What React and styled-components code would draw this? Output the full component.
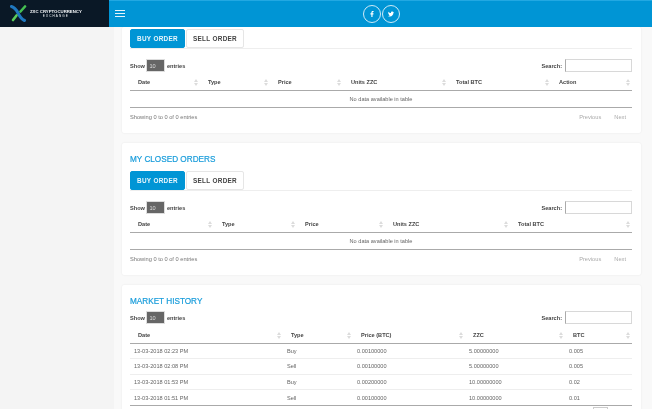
import React from 'react';
import styled, { createGlobalStyle } from 'styled-components';
import { FaFacebookF, FaTwitter } from 'react-icons/fa';

const blue = '#0095d5';

const closedCols = [84, 83, 88, 125, 122];
const openCols = [70, 70, 73, 105, 103, 81];
const historyCols = [153, 70, 112, 100, 67];

const openHeads = ['Date', 'Type', 'Price', 'Units ZZC', 'Total BTC', 'Action'];
const closedHeads = ['Date', 'Type', 'Price', 'Units ZZC', 'Total BTC'];
const historyHeads = ['Date', 'Type', 'Price (BTC)', 'ZZC', 'BTC'];

const history = [
  ['13-03-2018 02:23 PM', 'Buy', '0.00100000', '5.00000000', '0.005'],
  ['13-03-2018 02:08 PM', 'Sell', '0.00100000', '5.00000000', '0.005'],
  ['13-03-2018 01:53 PM', 'Buy', '0.00200000', '10.00000000', '0.02'],
  ['13-03-2018 01:51 PM', 'Sell', '0.00100000', '10.00000000', '0.01'],
];

function SortIcon() {
  return (
    <SortMark width="4" height="7" viewBox="0 0 4 7">
      <path d="M2 0 4 3H0z" />
      <path d="M2 7 0 4h4z" />
    </SortMark>
  );
}

function Logo() {
  return (
    <svg width="17" height="17" viewBox="0 0 17 17" fill="none" strokeLinecap="round">
      <path d="M1.5 1.5c3.5 1 5 3.5 6.500 6.500s3 6 6.500 7.500" stroke="#1f78c0" strokeWidth="3" />
      <path d="M15 1.500 10.500 6.500" stroke="#45c052" strokeWidth="2.600" />
      <path d="M6.500 10.500 3 15" stroke="#5bcc5b" strokeWidth="2.600" />
    </svg>
  );
}

function Controls({ $tight }) {
  return (
    <ControlRow $tight={$tight}>
      <ShowLabel>
        Show <LengthBox>10</LengthBox> entries
      </ShowLabel>
      <SearchLabel>
        Search: <SearchInput />
      </SearchLabel>
    </ControlRow>
  );
}

function Head({ cols, heads }) {
  return (
    <>
      <colgroup>
        {cols.map((w, i) => (
          <col key={i} style={{ width: w }} />
        ))}
      </colgroup>
      <thead>
        <tr>
          {heads.map((h) => (
            <Th key={h}>
              {h}
              <SortIcon />
            </Th>
          ))}
        </tr>
      </thead>
    </>
  );
}

function EmptyTable({ cols, heads }) {
  return (
    <>
      <Controls />
      <Table>
        <Head cols={cols} heads={heads} />
        <tbody>
          <tr>
            <EmptyCell colSpan={heads.length}>No data available in table</EmptyCell>
          </tr>
        </tbody>
      </Table>
      <Footer>
        <span>Showing 0 to 0 of 0 entries</span>
        <Pager>
          <span>Previous</span>
          <span>Next</span>
        </Pager>
      </Footer>
    </>
  );
}

function Tabs() {
  return (
    <TabBar>
      <Tab $active>BUY ORDER</Tab>
      <Tab>SELL ORDER</Tab>
    </TabBar>
  );
}

export default function App() {
  return (
    <Page>
      <GlobalStyle />
      <Header>
        <Brand>
          <Logo />
          <BrandText>
            <strong>ZXC CRYPTOCURRENCY</strong>
            <small>EXCHANGE</small>
          </BrandText>
        </Brand>
        <Bar>
          <Burger>
            <i />
            <i />
            <i />
          </Burger>
          <Social>
            <SocialLink>
              <FaFacebookF />
            </SocialLink>
            <SocialLink>
              <FaTwitter />
            </SocialLink>
          </Social>
        </Bar>
      </Header>
      <Main>
        <Card $top>
          <Tabs />
          <EmptyTable cols={openCols} heads={openHeads} />
        </Card>
        <Card>
          <Title>MY CLOSED ORDERS</Title>
          <Tabs />
          <EmptyTable cols={closedCols} heads={closedHeads} />
        </Card>
        <Card>
          <Title>MARKET HISTORY</Title>
          <Controls $tight />
          <Table>
            <Head cols={historyCols} heads={historyHeads} />
            <tbody>
              {history.map((row) => (
                <Row key={row[0]}>
                  {row.map((cell, i) => (
                    <Td key={i}>{cell}</Td>
                  ))}
                </Row>
              ))}
            </tbody>
          </Table>
          <PageBox />
        </Card>
      </Main>
    </Page>
  );
}

const GlobalStyle = createGlobalStyle`
  html, body {
    margin: 0;
    background: #fff;
    font-family: "Liberation Sans", Arial, sans-serif;
  }
`;

const Page = styled.div`
  height: 409px;
  overflow: hidden;
  display: flex;
  flex-direction: column;
  filter: blur(0.4px);
`;

const Header = styled.header`
  display: flex;
  height: 27px;
  flex: none;
`;

const Brand = styled.div`
  width: 109px;
  background: #0a1826;
  display: flex;
  align-items: center;
  gap: 3px;
  padding-left: 10px;
  box-sizing: border-box;
`;

const BrandText = styled.div`
  display: flex;
  flex-direction: column;
  align-items: center;
  color: #f4f6f8;
  line-height: 5px;

  strong {
    font-size: 4.3px;
    white-space: nowrap;
  }

  small {
    font-size: 3.1px;
    letter-spacing: 1.1px;
  }
`;

const Bar = styled.div`
  flex: 1;
  position: relative;
  background: ${blue};
  border-top: 1px solid #22a8e2;
  display: flex;
  align-items: center;
  justify-content: center;
  padding-left: 2px;
  padding-bottom: 1px;
`;

const Burger = styled.div`
  position: absolute;
  left: 6px;
  top: 9px;
  width: 10px;
  display: flex;
  flex-direction: column;
  gap: 1.5px;

  i {
    height: 1.3px;
    background: #e6f4fb;
  }
`;

const Social = styled.div`
  display: flex;
  gap: 1.5px;
`;

const SocialLink = styled.a`
  width: 18px;
  height: 18px;
  box-sizing: border-box;
  border: 1px solid #cfeaf7;
  border-radius: 50%;
  color: #fff;
  display: flex;
  align-items: center;
  justify-content: center;
  font-size: 6px;
`;

const Main = styled.main`
  flex: 1;
  min-height: 0;
  background: linear-gradient(to right, #f4f4f4 114px, #f9f9f9 114px);
  padding: 0 11px 0 122px;
  display: flex;
  flex-direction: column;
  gap: 10px;
`;

const Card = styled.section`
  background: #fff;
  border-radius: 2px;
  box-shadow: 0 0 2px rgba(0, 0, 0, 0.08);
  padding: ${(p) => (p.$top ? '2px' : '12px')} 9px 0 8px;
  height: ${(p) => (p.$top ? '106px' : '132px')};
  flex: none;
  box-sizing: border-box;
`;

const Title = styled.h2`
  margin: 0;
  font-size: 8.2px;
  line-height: 10px;
  font-weight: 400;
  color: #1a9ddb;
  -webkit-text-stroke: 0.2px #1a9ddb;
`;

const TabBar = styled.div`
  display: flex;
  gap: 1px;
  height: 19px;
  border-bottom: 1px solid #eeeeee;

  ${Title} + & {
    margin-top: 6px;
  }
`;

const Tab = styled.button`
  width: ${(p) => (p.$active ? '55px' : '58px')};
  padding: 0;
  height: 19px;
  border-radius: 2px;
  border: 1px solid ${(p) => (p.$active ? blue : '#e6e6e6')};
  background: ${(p) => (p.$active ? blue : '#fff')};
  color: ${(p) => (p.$active ? '#e8f6fc' : '#444')};
  font: 700 6.4px "Liberation Sans", Arial, sans-serif;
  letter-spacing: 0.3px;
`;

const ControlRow = styled.div`
  display: flex;
  justify-content: space-between;
  align-items: center;
  height: 13px;
  margin: ${(p) => (p.$tight ? '4px 0 5px' : '10px 0 4px')};
  font-size: 5.6px;
  font-weight: 700;
  color: #444;
`;

const ShowLabel = styled.label`
  display: flex;
  align-items: center;
  gap: 1.5px;
`;

const LengthBox = styled.span`
  width: 19px;
  height: 13px;
  box-sizing: border-box;
  padding: 3px 0 0 2px;
  background: #666;
  border: 1px solid #ddd;
  color: #ddd;
  font-weight: 400;
`;

const SearchLabel = styled.label`
  display: flex;
  align-items: center;
  gap: 3px;
`;

const SearchInput = styled.span`
  width: 67px;
  height: 13px;
  box-sizing: border-box;
  border: 1px solid #d8d8d8;
  border-left-color: #aaa;
  background: #fff;
`;

const Table = styled.table`
  width: 100%;
  table-layout: fixed;
  border-collapse: collapse;
  font-size: 5.6px;
  color: #666;
  border-bottom: 1.5px solid #aaa;
`;

const Th = styled.th`
  position: relative;
  height: 14px;
  box-sizing: border-box;
  padding: 0 0 1px 8px;
  text-align: left;
  color: #444;
  font-weight: 700;
  border-bottom: 1.5px solid #aaa;
`;

const SortMark = styled.svg`
  position: absolute;
  right: 2px;
  top: 3px;
  fill: #dcdcdc;
`;

const EmptyCell = styled.td`
  height: 16px;
  padding: 0;
  text-align: center;
`;

const Row = styled.tr`
  & + & td {
    border-top: 1px solid #eeeeee;
  }
`;

const Td = styled.td`
  height: 14.6px;
  padding: 0 0 0 4px;
`;

const Footer = styled.div`
  display: flex;
  justify-content: space-between;
  align-items: center;
  height: 19px;
  font-size: 5.700px;
  color: #777;
`;

const Pager = styled.div`
  display: flex;
  gap: 13px;
  padding-right: 6px;
  color: #aaa;
`;

const PageBox = styled.div`
  width: 15px;
  height: 6px;
  box-sizing: border-box;
  margin: 1px 0 0 463px;
  border: 1px solid #ccc;
`;
